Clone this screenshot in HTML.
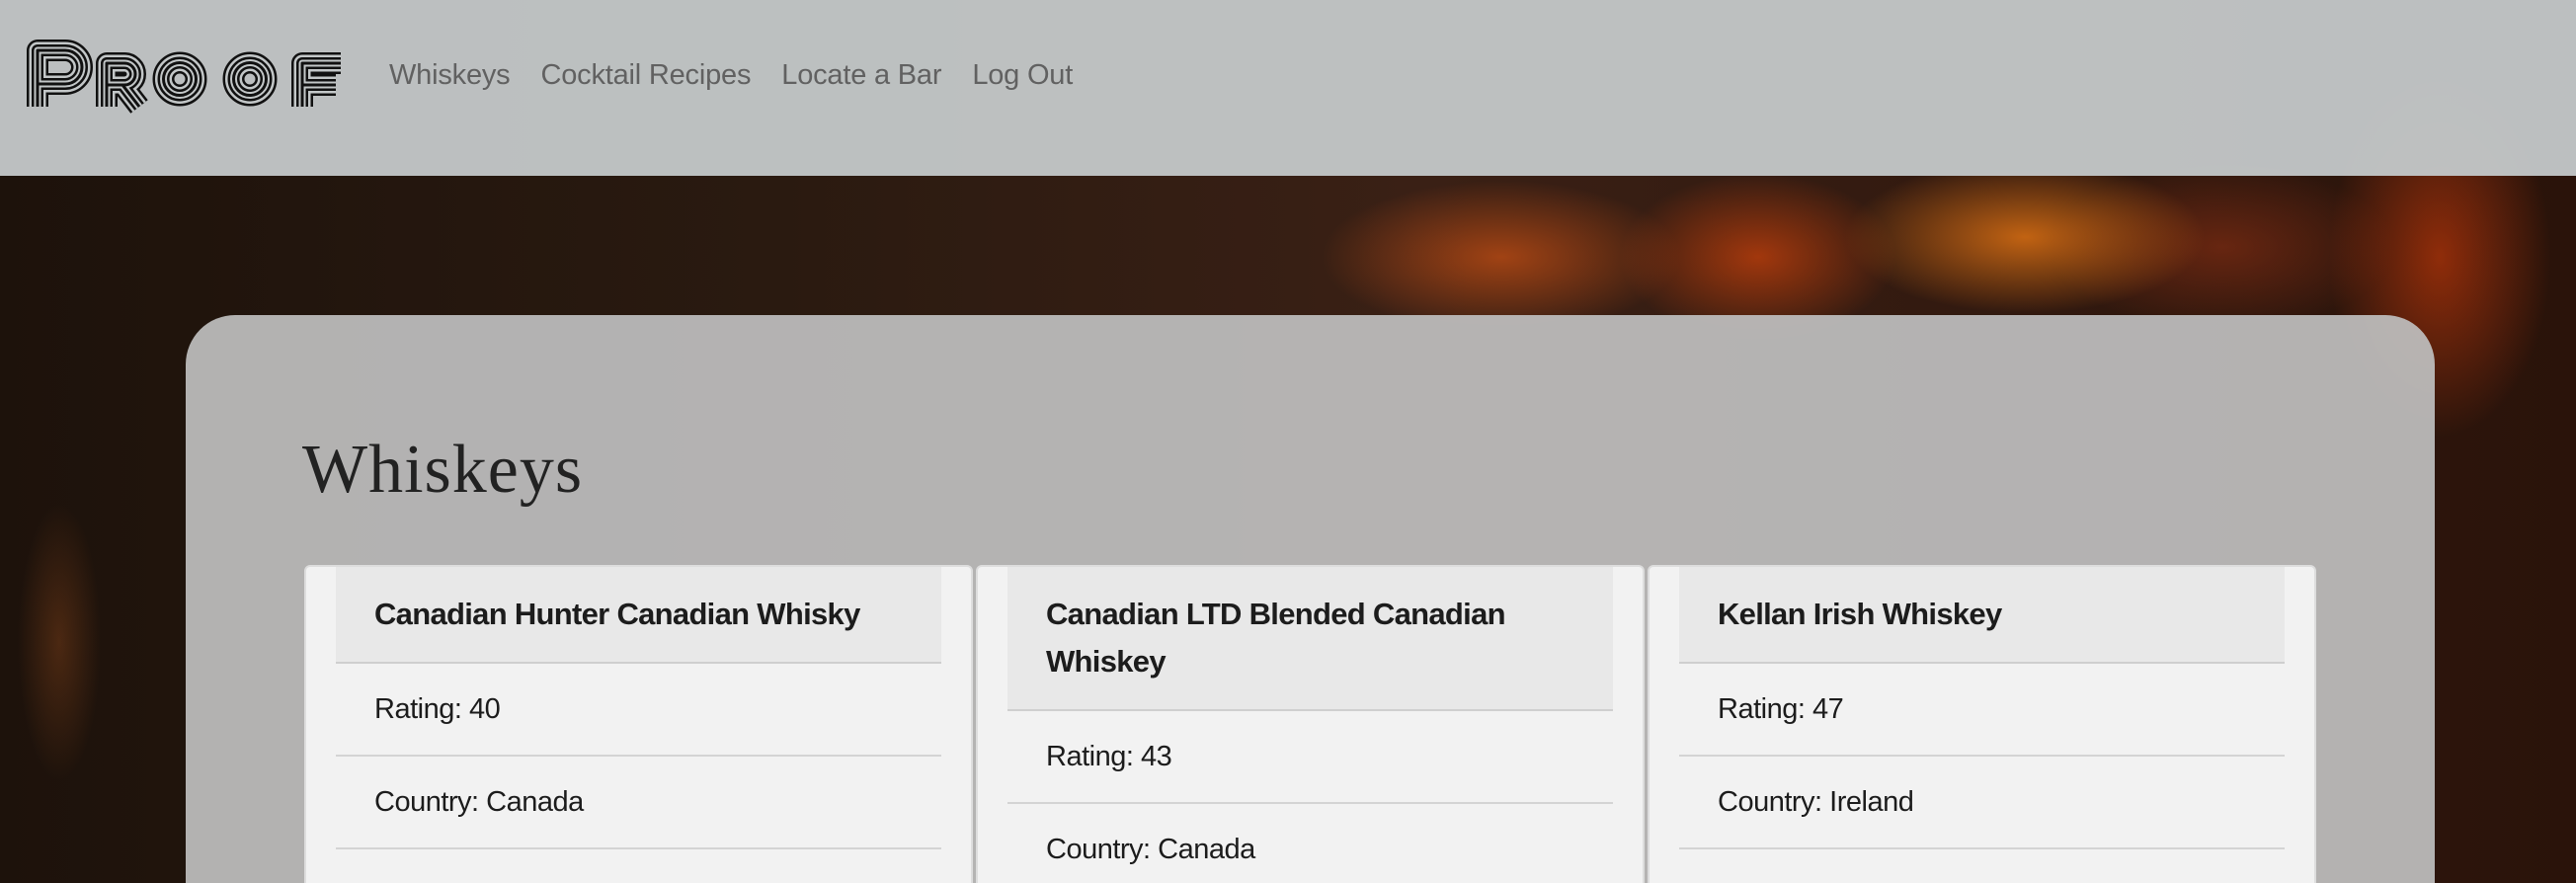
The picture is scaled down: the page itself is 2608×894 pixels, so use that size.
<!DOCTYPE html>
<html><head><meta charset="utf-8"><style>
html,body{margin:0;padding:0;width:2608px;height:894px;overflow:hidden;font-family:"Liberation Sans",sans-serif;}
body{position:relative;background:#140b06;}
.bg{position:absolute;inset:0;background:
radial-gradient(ellipse 260px 110px at 2050px 240px,rgba(255,130,20,.7),transparent 70%),
radial-gradient(ellipse 200px 120px at 1780px 260px,rgba(220,70,10,.65),transparent 70%),
radial-gradient(ellipse 260px 110px at 1520px 260px,rgba(230,90,20,.6),transparent 70%),
radial-gradient(ellipse 160px 260px at 2470px 260px,rgba(210,60,10,.6),transparent 70%),
radial-gradient(ellipse 250px 120px at 2250px 250px,rgba(150,50,20,.55),transparent 70%),
radial-gradient(ellipse 60px 200px at 60px 650px,rgba(160,80,30,.35),transparent 70%),
linear-gradient(90deg,#1d120b 0%,#2a1a10 30%,#3a2015 55%,#2a130a 100%);}
.hdr{position:absolute;left:0;top:0;width:2608px;height:178px;background:rgba(195,199,200,.96);}
.nav{position:absolute;top:60px;left:394px;font-size:29px;color:#616161;letter-spacing:-0.2px;}
.nav span{margin-right:31px;}
.panel{position:absolute;left:188px;top:319px;width:2277px;height:700px;border-radius:50px;background:rgba(190,190,190,.93);}
h1{position:absolute;left:306px;top:436px;margin:0;font-family:"Liberation Serif",serif;font-weight:normal;font-size:70px;color:#222;letter-spacing:1px;}
.card{position:absolute;top:572px;width:677px;height:400px;background:rgba(246,246,246,.93);border-radius:6px;border:2px solid #ddd;box-sizing:border-box;}
.card .hd{margin:0 30px;background:rgba(225,225,225,.6);padding:24px 39px 24px;font-weight:bold;font-size:31px;letter-spacing:-0.7px;line-height:48px;color:#1c1c1c;border-bottom:2px solid #cfcfcf;}
.card .it{margin:0 30px;padding:0 39px;height:92px;line-height:92px;font-size:29px;letter-spacing:-0.5px;color:#1c1c1c;border-bottom:2px solid #d4d4d4;}
</style></head><body>
<div class="bg"></div>
<div class="hdr"></div>
<svg style="position:absolute;left:0;top:0" width="400" height="130">
<defs><g id="L" fill="none" stroke-linecap="butt" stroke-linejoin="round">
<path d="M38 108 V51 H66 A17 17 0 0 1 66 85 H38"/>
<path d="M108 108 V64 H126 A11 11 0 0 1 126 86 H108 M124 86 L141 108"/>
<circle cx="182" cy="80" r="16.5"/>
<circle cx="253" cy="80" r="16.5"/>
<path d="M306 108 V64 H345 M306 86 H340"/>
</g></defs>
<use href="#L" stroke="#111" stroke-width="22"/>
<use href="#L" stroke="#c3c7c8" stroke-width="17"/>
<use href="#L" stroke="#111" stroke-width="12"/>
<use href="#L" stroke="#c3c7c8" stroke-width="7"/>
<use href="#L" stroke="#111" stroke-width="3"/>
</svg>
<div class="nav"><span>Whiskeys</span><span>Cocktail Recipes</span><span>Locate a Bar</span><span>Log Out</span></div>
<div class="panel"></div>
<h1>Whiskeys</h1>
<div class="card" style="left:308px"><div class="hd">Canadian Hunter Canadian Whisky</div><div class="it">Rating: 40</div><div class="it">Country: Canada</div></div>
<div class="card" style="left:988px"><div class="hd">Canadian LTD Blended Canadian Whiskey</div><div class="it">Rating: 43</div><div class="it">Country: Canada</div></div>
<div class="card" style="left:1668px"><div class="hd">Kellan Irish Whiskey</div><div class="it">Rating: 47</div><div class="it">Country: Ireland</div></div>
</body></html>
